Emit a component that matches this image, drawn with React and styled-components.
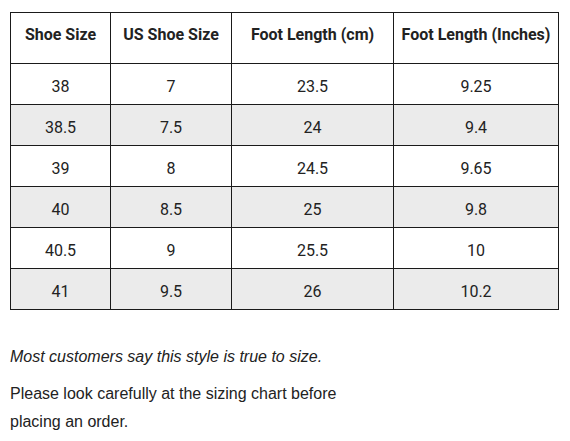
import styled, { createGlobalStyle } from "styled-components";

const GlobalStyle = createGlobalStyle`
  body {
    margin: 0;
    background: #fff;
    color: #222;
  }
`;

const Page = styled.div`
  padding: 12px 12px 0 10px;
`;

const Table = styled.table`
  border-collapse: collapse;
  width: 548px;
  table-layout: fixed;
  font-family: Roboto, "Liberation Sans", sans-serif;
  font-size: 16px;
  color: #222;
`;

const Th = styled.th`
  border: 1px solid #1a1a1a;
  padding: 8px 4px 14px;
  line-height: 28px;
  font-weight: 700;
  text-align: center;
  white-space: nowrap;
`;

const Row = styled.tr`
  background: ${(p) => (p.$shaded ? "#ebebeb" : "#fff")};
`;

const Td = styled.td`
  border: 1px solid #1a1a1a;
  padding: 11px 4px 5px;
  line-height: 24px;
  text-align: center;
`;

const Note = styled.p`
  font-family: "Liberation Sans", Arial, sans-serif;
  font-size: 16px;
  line-height: 28px;
  color: #222;
  max-width: 340px;
  margin: ${(p) => (p.$first ? "33px 0 0" : "9px 0 0")};
  font-style: ${(p) => (p.$italic ? "italic" : "normal")};
`;

const rows = [
  ["38", "7", "23.5", "9.25"],
  ["38.5", "7.5", "24", "9.4"],
  ["39", "8", "24.5", "9.65"],
  ["40", "8.5", "25", "9.8"],
  ["40.5", "9", "25.5", "10"],
  ["41", "9.5", "26", "10.2"],
];

export default function App() {
  return (
    <Page>
      <GlobalStyle />
      <Table>
        <colgroup>
          <col style={{ width: 100 }} />
          <col style={{ width: 121 }} />
          <col style={{ width: 162 }} />
          <col style={{ width: 165 }} />
        </colgroup>
        <thead>
          <tr>
            <Th>Shoe Size</Th>
            <Th>US Shoe Size</Th>
            <Th>Foot Length (cm)</Th>
            <Th>Foot Length (Inches)</Th>
          </tr>
        </thead>
        <tbody>
          {rows.map((r, i) => (
            <Row key={i} $shaded={i % 2 === 1}>
              {r.map((c, j) => (
                <Td key={j}>{c}</Td>
              ))}
            </Row>
          ))}
        </tbody>
      </Table>
      <Note $first $italic>
        Most customers say this style is true to size.
      </Note>
      <Note>
        Please look carefully at the sizing chart before placing an order.
      </Note>
    </Page>
  );
}
